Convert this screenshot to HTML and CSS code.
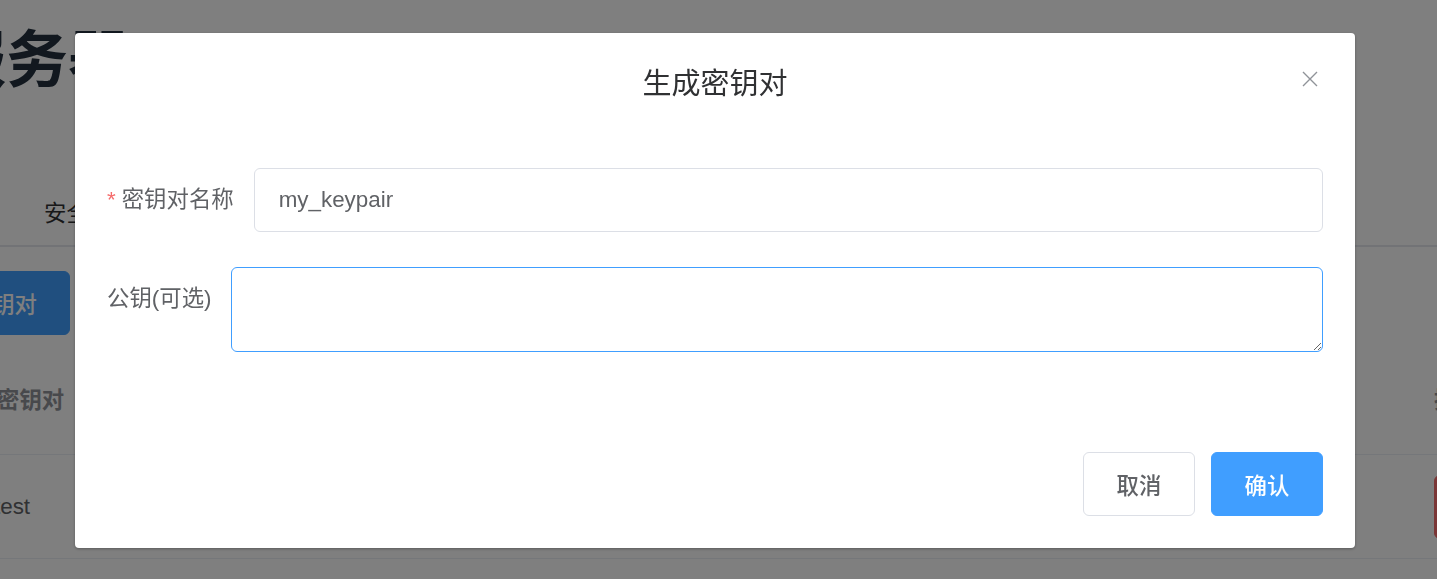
FILE: index.html
```html
<!DOCTYPE html>
<html lang="zh-CN">
<head>
  <meta charset="UTF-8">
  <meta name="viewport" content="width=device-width, initial-scale=1.0">
  <title>生成密钥对</title>
  <link rel="stylesheet" href="styles.css">
</head>
<body>
  <div class="page">
    <h1 class="page-title">云服务器</h1>

    <div class="tabs">
      <span class="tab">安全组</span>
    </div>

    <div class="toolbar">
      <button class="btn btn-primary">创建密钥对</button>
    </div>

    <div class="table">
      <div class="table-row table-head">
        <div class="cell cell-name">密钥对</div>
        <div class="cell cell-ops">操作</div>
      </div>
      <div class="table-row">
        <div class="cell cell-name cell-text">test</div>
        <div class="cell cell-ops">
          <button class="btn btn-danger">删除</button>
        </div>
      </div>
    </div>
  </div>

  <!-- dialog overlay -->
  <div class="overlay">
    <div class="dialog">
      <div class="dialog-header">
        <span class="dialog-title">生成密钥对</span>
        <button class="dialog-close" aria-label="关闭">
          <svg width="16" height="16" viewBox="0 0 16 16">
            <path d="M1 1 L15 15 M15 1 L1 15" stroke="#909399" stroke-width="1.4" fill="none"/>
          </svg>
        </button>
      </div>

      <div class="dialog-body">
        <form class="form">
          <div class="form-item">
            <label class="form-label" for="name"><span class="required">*</span>密钥对名称</label>
            <input class="form-input" id="name" type="text" value="my_keypair">
          </div>
          <div class="form-item">
            <label class="form-label" for="pubkey">公钥(可选)</label>
            <textarea class="form-textarea" id="pubkey"></textarea>
          </div>
        </form>
      </div>

      <div class="dialog-footer">
        <button class="btn btn-default">取消</button>
        <button class="btn btn-primary btn-confirm">确认</button>
      </div>
    </div>
  </div>
</body>
</html>
```

FILE: styles.css
```css
html, body {
  margin: 0;
  padding: 0;
}

body {
  width: 1437px;
  height: 579px;
  overflow: hidden;
  background-color: #fff;
  font-family: "Liberation Sans", "Noto Sans CJK SC", sans-serif;
  color: #606266;
}

/* page behind the dialog */
.page {
  margin-left: -108px;
  width: 1700px;
}

.page-title {
  margin: 0 0 0 -10px;
  padding: 28px 0 0;
  font-size: 62px;
  line-height: 66px;
  font-weight: 700;
  color: #24313f;
}

.tabs {
  margin-top: 89px;
  padding-left: 152px;
  border-bottom: 2px solid #e4e7ed;
}

.tab {
  display: inline-block;
  font-size: 22.4px;
  line-height: 62px;
  color: #303133;
}

.toolbar {
  padding-top: 24px;
}

.btn {
  height: 64px;
  padding: 0 32px;
  border: 1px solid #dcdfe6;
  border-radius: 6px;
  font-family: inherit;
  font-size: 22.4px;
  font-weight: 500;
  cursor: pointer;
}

.btn-primary {
  background-color: #409eff;
  border-color: #409eff;
  color: #fff;
}

.btn-danger {
  background-color: #f56c6c;
  border-color: #f56c6c;
  color: #fff;
}

.btn-default {
  background-color: #fff;
  color: #606266;
}

.table {
  margin-top: 35px;
}

.table-row {
  display: grid;
  grid-template-columns: 1542px 1fr;
  border-bottom: 1px solid #ebeef5;
}

.table-head {
  height: 84px;
  font-size: 22.4px;
  font-weight: 700;
  color: #909399;
  line-height: 62px;
}

.table-head .cell-name {
  padding-left: 105px;
}

.table-row:not(.table-head) {
  height: 103px;
  align-items: center;
}

.cell-text {
  padding-left: 102px;
  font-size: 22.4px;
  color: #606266;
}

/* dialog */
.overlay {
  position: fixed;
  top: 0;
  left: 0;
  right: 0;
  bottom: 0;
  background-color: rgba(0, 0, 0, 0.5);
}

.dialog {
  position: relative;
  width: 1280px;
  margin: 33px 0 0 75px;
  background-color: #fff;
  border-radius: 4px;
  box-shadow: 0 1px 3px rgba(0, 0, 0, 0.3);
}

.dialog-header {
  padding: 32px 32px 16px;
  text-align: center;
}

.dialog-title {
  font-size: 29px;
  line-height: 39px;
  color: #303133;
}

.dialog-close {
  position: absolute;
  top: 38px;
  right: 37px;
  width: 16px;
  height: 16px;
  padding: 0;
  border: none;
  background: none;
  cursor: pointer;
  display: flex;
}

.dialog-body {
  padding: 48px 32px;
}

.form-item {
  display: flex;
  align-items: flex-start;
  margin-bottom: 35px;
}

.form-label {
  flex: none;
  padding-right: 20px;
  font-size: 22.4px;
  line-height: 64px;
  color: #606266;
  white-space: nowrap;
}

.required {
  color: #f56c6c;
  margin-right: 6px;
}

.form-input {
  flex: 1;
  height: 64px;
  box-sizing: border-box;
  padding: 0 24px;
  border: 1px solid #dcdfe6;
  border-radius: 6px;
  font-family: inherit;
  font-size: 22.4px;
  color: #606266;
  outline: none;
}

.form-textarea {
  flex: 1;
  height: 85px;
  box-sizing: border-box;
  padding: 8px 24px;
  border: 1px solid #409eff;
  border-radius: 6px;
  font-family: inherit;
  font-size: 22.4px;
  color: #606266;
  resize: vertical;
  outline: none;
}

.dialog-footer {
  display: flex;
  justify-content: flex-end;
  gap: 16px;
  padding: 17px 32px 32px;
}

.dialog-footer .btn {
  width: 112px;
  padding: 0;
}
```
